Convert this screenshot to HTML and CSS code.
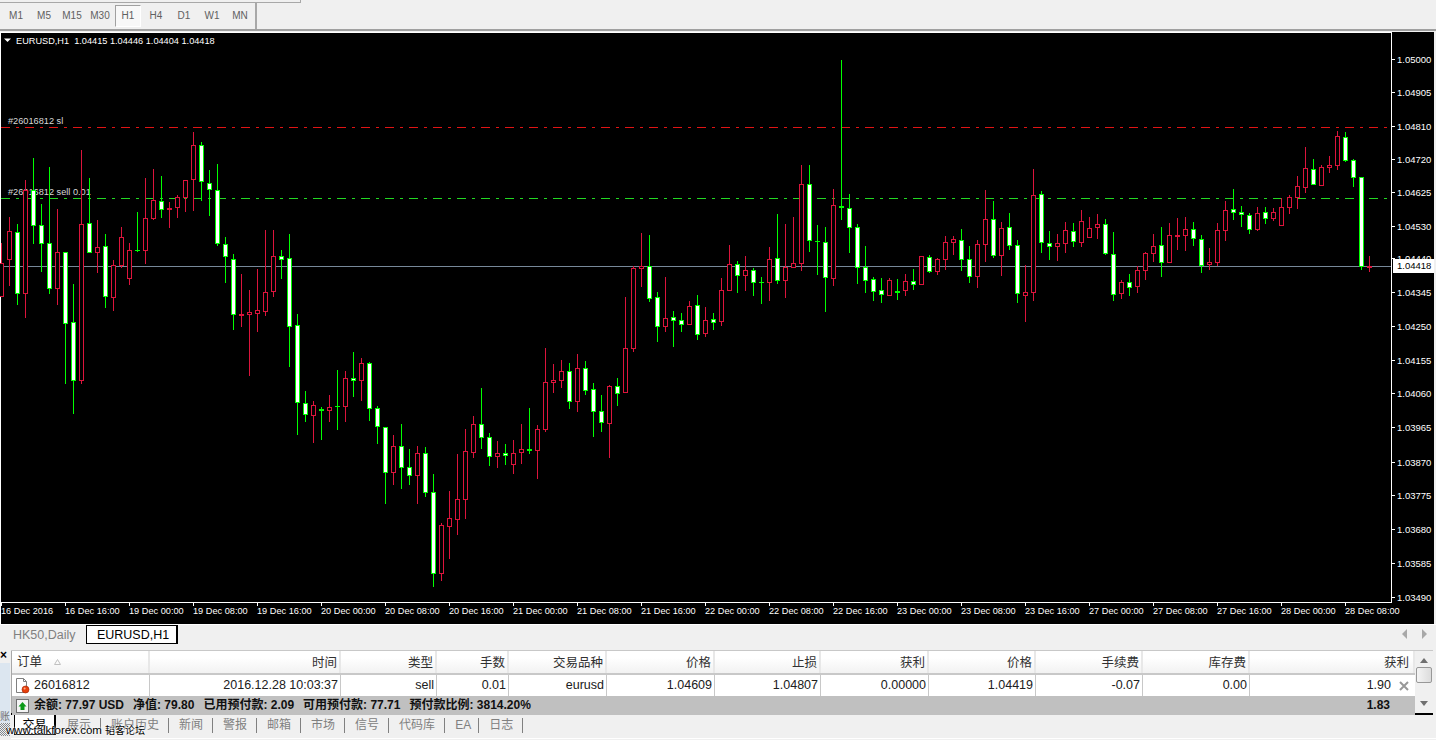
FILE: index.html
```html
<!DOCTYPE html>
<html>
<head>
    <meta charset="utf-8">
    <link rel="stylesheet" href="styles.css">
</head>
<body>
    <!-- Timeframe toolbar -->
    <div class="toolbar">
        <div class="toolbar-edge"></div>
        <div class="periods">
            <span class="period">M1</span>
            <span class="period">M5</span>
            <span class="period">M15</span>
            <span class="period">M30</span>
            <span class="period active">H1</span>
            <span class="period">H4</span>
            <span class="period">D1</span>
            <span class="period">W1</span>
            <span class="period">MN</span>
        </div>
    </div>

    <!-- Filled in by chart.js -->
    <svg id="chart" class="chart" viewBox="0 32 1434 592"></svg>

    <!-- Chart window tabs -->
    <div class="chart-tabs">
        <span class="chart-tab">HK50,Daily</span>
        <span class="chart-tab active">EURUSD,H1</span>
        <div class="tab-nav">
            <svg width="6" height="10" viewBox="0 0 6 10"><path d="M5 0V10L0 5Z"/></svg>
            <svg width="6" height="10" viewBox="0 0 6 10"><path d="M1 0V10L6 5Z"/></svg>
        </div>
    </div>

    <!-- Terminal panel -->
    <div class="terminal">
        <div class="side-strip">
            <span class="side-close">×</span>
            <div class="side-label">账</div>
            <div class="side-hatch"></div>
        </div>
        <div class="terminal-main">
            <div class="trade-area">
                <div class="trade-table">
                    <div class="grid-row head-row">
                        <div class="cell first">订单
                            <svg class="sort-mark" width="7" height="6" viewBox="0 0 7 6"><path d="M3.500 .5L6.500 5.500H.5Z"/></svg>
                        </div>
                        <div class="cell">时间</div>
                        <div class="cell">类型</div>
                        <div class="cell">手数</div>
                        <div class="cell">交易品种</div>
                        <div class="cell">价格</div>
                        <div class="cell">止损</div>
                        <div class="cell">获利</div>
                        <div class="cell">价格</div>
                        <div class="cell">手续费</div>
                        <div class="cell">库存费</div>
                        <div class="cell">获利</div>
                    </div>
                    <div class="grid-row order-row">
                        <div class="cell first">
                            <svg class="row-icon" width="15" height="17" viewBox="0 0 15 17">
                                <path d="M1.500 1.500H8.500L11.500 4.500V15.500H1.500Z" fill="#fff" stroke="#808080"/>
                                <path d="M8.500 1.500V4.500H11.500" fill="none" stroke="#808080"/>
                                <circle cx="10.500" cy="12.500" r="3.500" fill="#e8400c" stroke="#a02000" stroke-width=".6"/>
                                <circle cx="9.600" cy="11.600" r="1" fill="#ffb090"/>
                            </svg>
                            26016812
                        </div>
                        <div class="cell">2016.12.28 10:03:37</div>
                        <div class="cell">sell</div>
                        <div class="cell">0.01</div>
                        <div class="cell">eurusd</div>
                        <div class="cell">1.04609</div>
                        <div class="cell">1.04807</div>
                        <div class="cell">0.00000</div>
                        <div class="cell">1.04419</div>
                        <div class="cell">-0.07</div>
                        <div class="cell">0.00</div>
                        <div class="cell last">1.90
                            <svg class="close-x" width="10" height="10" viewBox="0 0 10 10"><path d="M1 1L9 9M9 1L1 9"/></svg>
                        </div>
                    </div>
                    <div class="summary-row">
                        <svg class="summary-icon" width="13" height="14" viewBox="0 0 13 14">
                            <rect x=".5" y=".5" width="12" height="13" fill="#f4f4f4" stroke="#707070"/>
                            <path d="M6.500 3L10.500 7.500H8.500V11H4.500V7.500H2.500Z" fill="#0c9a18"/>
                        </svg>
                        <span class="summary-item">余额: 77.97 USD</span>
                        <span class="summary-item">净值: 79.80</span>
                        <span class="summary-item">已用预付款: 2.09</span>
                        <span class="summary-item">可用预付款: 77.71</span>
                        <span class="summary-item">预付款比例: 3814.20%</span>
                        <span class="summary-total">1.83</span>
                    </div>
                </div>
                <div class="scrollbar">
                    <svg width="8" height="5" viewBox="0 0 8 5"><path d="M4 0L8 5H0Z"/></svg>
                    <div class="scroll-thumb"></div>
                    <svg class="scroll-down" width="8" height="5" viewBox="0 0 8 5"><path d="M0 0H8L4 5Z"/></svg>
                </div>
            </div>
            <div class="terminal-tabs">
                <span class="term-tab active">交易</span>
                <span class="term-tab">展示</span>
                <span class="term-tab">账户历史</span>
                <span class="term-tab">新闻</span>
                <span class="term-tab">警报</span>
                <span class="term-tab">邮箱</span>
                <span class="term-tab">市场</span>
                <span class="term-tab">信号</span>
                <span class="term-tab">代码库</span>
                <span class="term-tab narrow">EA</span>
                <span class="term-tab">日志</span>
            </div>
        </div>
    </div>

    <div class="watermark">www.talkforex.com <span class="watermark-cn">韬客论坛</span></div>

    <script src="chart.js"></script>
</body>
</html>
```

FILE: styles.css
```css
body {
    margin: 0;
    width: 1436px;
    height: 740px;
    overflow: hidden;
    position: relative;
    display: flex;
    flex-direction: column;
    background-color: #f0f0f0;
    font-family: "Liberation Sans", "Noto Sans CJK SC", sans-serif;
    font-size: 12.5px;
    color: #202020;
}

/* Toolbar */
.toolbar {
    height: 32px;
    flex: none;
    box-sizing: border-box;
}
.toolbar-edge {
    width: 300px;
    height: 2px;
    border-bottom: 1px solid #a8a8a8;
    border-right: 1px solid #a8a8a8;
}
.periods {
    display: flex;
    width: 253px;
    height: 26px;
    padding-left: 2px;
    border-right: 2px solid #a8a8a8;
    align-items: center;
    box-sizing: content-box;
}
.toolbar::after {
    content: "";
    display: block;
    height: 2px;
    background-color: #a0a0a0;
}
.period {
    width: 28px;
    height: 22px;
    line-height: 22px;
    text-align: center;
    font-size: 10px;
    color: #606060;
    box-sizing: border-box;
}
.period.active {
    width: 26px;
    margin: 0 1px;
    line-height: 20px;
    background-color: #f8f8f8;
    border: 1px solid;
    border-color: #a0a0a0 #ffffff #ffffff #a0a0a0;
}

/* Chart */
.chart {
    display: block;
    flex: none;
    width: 1434px;
    height: 592px;
    background-color: #000000;
}
.chart rect {
    shape-rendering: crispEdges;
}
.chart-label {
    fill: #ffffff;
    font-size: 9.2px;
}
.chart-label.price {
    font-size: 9.5px;
}
.chart-label.order {
    fill: #d8d8d8;
}
.chart-label.price-now {
    fill: #000000;
}
.ohlc-marker {
    fill: #ffffff;
}

/* Chart tabs */
.chart-tabs {
    flex: none;
    height: 21px;
    display: flex;
    align-items: flex-start;
    border-top: 1px solid #ffffff;
    box-sizing: border-box;
    padding-left: 13px;
}
.chart-tab {
    width: 73px;
    height: 20px;
    line-height: 20px;
    color: #808080;
}
.chart-tab.active {
    width: 92px;
    height: 19px;
    line-height: 19px;
    box-sizing: border-box;
    padding-left: 3px;
    text-align: center;
    color: #000000;
    background-color: #ffffff;
    border: 1px solid #000000;
    border-right-width: 2px;
}
.tab-nav {
    margin-left: auto;
    margin-right: 9px;
    margin-top: 4px;
    display: flex;
    gap: 13px;
}
.tab-nav svg {
    fill: #a8a8a8;
}

/* Terminal */
.terminal {
    flex: 1;
    display: flex;
    padding-top: 5px;
    min-height: 0;
}
.side-strip {
    width: 10px;
    flex: none;
    margin-right: 1px;
    display: flex;
    flex-direction: column;
}
.side-close {
    height: 13px;
    line-height: 10px;
    font-size: 12px;
    font-weight: bold;
    color: #000000;
}
.side-label {
    flex: 1;
    background-color: #dce6f0;
    font-size: 10px;
    line-height: 10px;
    padding-top: 49px;
    box-sizing: border-box;
    color: #707070;
    overflow: hidden;
}
.side-hatch {
    height: 13px;
    margin-bottom: 4px;
    background: repeating-conic-gradient(#808890 0 25%, #f0f0f0 0 50%) 0 0 / 2px 2px;
}
.terminal-main {
    flex: 1;
    min-width: 0;
    display: flex;
    flex-direction: column;
}
.trade-area {
    display: flex;
    height: 65px;
    border-bottom: 2px solid #000000;
    margin-right: 3px;
    border-top: 1px solid #c8c8c8;
    box-sizing: border-box;
}
.trade-table {
    width: 1404px;
    flex: none;
    background-color: #ffffff;
    border-left: 1px solid #a8a8a8;
    box-sizing: border-box;
}
.grid-row {
    display: grid;
    grid-template-columns: 138px 191px 96px 72px 98px 108px 106px 108px 107px 107px 107px 165px;
}
.cell {
    text-align: right;
    padding-right: 3px;
    border-right: 1px solid #c8c8c8;
    overflow: hidden;
    white-space: nowrap;
}
.cell:last-child {
    border-right: none;
}
.cell.first {
    text-align: left;
    display: flex;
    align-items: center;
}
.head-row {
    height: 22px;
    line-height: 24px;
    background: linear-gradient(#ffffff 0 30%, #f2f2f2 100%);
    border-bottom: 2px solid #c8c8c8;
}
.head-row .cell {
    border-right: 2px solid #e8e8e8;
    padding-right: 2px;
    box-sizing: border-box;
    color: #303030;
}
.head-row .cell:last-child {
    padding-right: 4px;
}
.head-row .cell.first {
    padding-left: 5px;
}
.sort-mark {
    margin-left: 12px;
    fill: none;
    stroke: #c0c0c0;
}
.order-row {
    height: 21px;
    line-height: 21px;
}
.order-row .cell {
    box-sizing: border-box;
    padding-right: 2px;
}
.order-row .cell.first {
    padding-left: 3px;
}
.row-icon {
    margin-right: 4px;
}
.cell.last {
    display: flex;
    justify-content: flex-end;
    align-items: center;
    padding-right: 6px;
}
.close-x {
    margin-left: 8px;
    stroke: #989898;
    stroke-width: 2;
}
.summary-row {
    height: 19px;
    line-height: 17px;
    display: flex;
    align-items: center;
    background-color: #c0c0c0;
    font-weight: bold;
    font-size: 12px;
    color: #101010;
    padding-left: 4px;
    gap: 9px;
}
.summary-icon {
    margin-right: -4px;
    flex: none;
}
.summary-total {
    margin-left: auto;
    margin-right: 25px;
}
.scrollbar {
    flex: 1;
    display: flex;
    flex-direction: column;
    align-items: center;
    padding-top: 7px;
    padding-bottom: 7px;
    box-sizing: border-box;
    fill: #707070;
}
.scroll-thumb {
    width: 14px;
    height: 14px;
    margin-top: 4px;
    border: 1px solid #989898;
    border-radius: 2px;
    background: linear-gradient(90deg, #f4f4f4, #dcdcdc);
}
.scroll-down {
    margin-top: auto;
}
.terminal-tabs {
    display: flex;
    height: 23px;
    align-items: flex-start;
    border-bottom: 1px solid #ffffff;
    padding-left: 3px;
    box-sizing: content-box;
}
.term-tab {
    margin-top: 3px;
    padding: 0 9px 0 10px;
    height: 15px;
    line-height: 15px;
    color: #808080;
    border-right: 1px solid #808080;
    font-size: 12px;
}
.term-tab.narrow {
    padding-right: 7px;
}
.term-tab.active {
    margin-top: 0;
    width: 42px;
    height: 20px;
    padding: 0;
    box-sizing: border-box;
    line-height: 20px;
    text-align: center;
    color: #000000;
    background-color: #ffffff;
    border: 1px solid #000000;
    border-top: none;
    border-right-width: 2px;
    margin-right: 1px;
}

/* Forum watermark over the corner of the panel */
.watermark {
    position: absolute;
    left: 6px;
    top: 723px;
    font-size: 11.5px;
    line-height: 15px;
    color: #000000;
    text-shadow: 0 0 2px #ffffff, 0 0 2px #ffffff;
    white-space: nowrap;
}
.watermark-cn {
    font-size: 10px;
}
```

FILE: chart.js
```js
// candle rows: [colour, high, body top, body bottom, low]
// y values are measured at 3x from the group's origin oy
var groups = [
    { oy: 130, rows: [
        ['r',340,400,500,500], ['r',262,304,389,467], ['g',282,307,491,525], ['r',150,181,491,563],
        ['g',84,181,287,342], ['g',222,286,341,426], ['g',111,340,476,491], ['r',238,367,476,525],
        ['g',367,367,581,762], ['g',462,577,752,852], ['r',60,283,752,762], ['g',144,280,368,368],
        ['r',270,352,368,429], ['g',312,349,500,534], ['r',390,406,503,543], ['r',291,322,409,414],
        ['r',339,361,446,465], ['g',246,360,363,366], ['r',144,265,362,402], ['r',117,211,266,270],
        ['g',138,214,239,264], ['r',216,235,239,294], ['r',195,202,233,264], ['r',150,151,205,246],
        ['r',6,46,149,243], ['g',36,46,157,213], ['g',120,160,181,258], ['g',102,181,343,348],
        ['g',321,343,382,459], ['g',372,388,556,600]
    ]},
    { oy: 240, rows: [
        ['r',102,222,228,261], ['r',150,217,224,408], ['r',87,211,221,276], ['r',-30,157,215,228],
        ['r',-30,49,155,171], ['g',30,49,59,117], ['g',-18,55,260,381], ['g',222,256,488,585],
        ['g',453,490,524,546], ['r',483,496,527,609], ['g',501,507,512,600], ['r',465,502,512,546],
        ['g',390,498,501,570], ['r',393,415,500,546], ['g',336,415,422,471], ['r',354,370,422,483],
        ['g',366,370,506,543], ['g',498,505,560,612], ['g',562,562,698,792], ['r',585,619,698,735],
        ['g',552,619,683,747], ['g',627,682,707,735], ['r',618,640,707,792], ['g',621,640,758,771],
        ['g',702,757,1001,1041], ['r',849,856,1001,1023], ['r',753,835,860,957], ['r',642,778,839,885],
        ['r',567,634,779,837], ['r',528,553,638,654], ['g',444,553,593,627], ['g',579,592,650,678],
        ['r',603,640,650,684]
    ]},
    { oy: 230, rows: [
        ['g',642,670,677,705], ['r',630,670,704,732], ['r',582,658,668,702], ['g',534,657,663,672],
        ['r',585,598,662,747], ['r',354,457,600,606], ['r',402,451,458,489], ['r',390,424,453,474],
        ['g',399,424,516,537], ['r',372,415,516,546], ['g',393,415,483,495], ['g',459,478,546,621],
        ['g',495,544,579,606], ['r',465,469,582,684], ['g',444,469,492,528], ['r',201,355,488,488],
        ['r',108,114,357,366], ['r',9,108,117,171], ['g',15,109,207,216], ['g',186,202,291,336],
        ['r',141,265,291,306], ['g',243,262,273,351], ['g',249,271,285,306], ['r',213,229,285,285],
        ['g',195,226,315,330], ['r',231,271,312,321], ['g',249,268,279,300], ['r',144,181,276,288],
        ['r',45,103,183,183], ['g',93,103,138,189], ['r',78,121,138,183], ['g',114,121,159,198],
        ['g',141,156,160,222], ['r',51,88,159,213], ['g',-48,85,153,162]
    ]},
    { oy: 150, rows: [
        ['r',222,352,392,444], ['r',201,340,353,353], ['r',45,103,342,363], ['g',45,103,272,306],
        ['g',225,273,276,375], ['g',231,277,383,486], ['r',117,166,386,408], ['g',-270,168,173,210],
        ['g',132,175,233,309], ['g',222,232,353,402], ['g',288,352,392,429], ['g',381,388,425,453],
        ['g',384,421,434,459], ['r',384,391,437,437], ['g',387,424,428,450], ['r',372,394,422,438],
        ['g',357,394,404,420], ['r',319,319,404,404], ['g',315,322,365,369], ['r',324,328,365,375],
        ['r',258,277,329,360], ['r',258,268,278,315], ['g',237,271,329,363], ['g',288,328,380,399],
        ['r',270,283,380,414], ['r',120,208,284,336], ['g',153,208,317,324], ['r',216,235,317,378],
        ['g',189,232,287,300], ['g',270,286,433,459], ['r',345,427,437,516], ['r',57,136,428,453],
        ['g',123,133,280,309], ['g',243,280,290,330], ['r',252,280,292,333], ['r',216,241,281,309],
        ['g',219,244,275,291]
    ]},
    { oy: 120, rows: [
        ['r',270,304,368,381], ['r',291,325,353,353], ['r',282,313,323,357], ['g',297,313,401,405],
        ['g',336,403,524,543], ['r',480,487,521,537], ['g',462,487,503,528], ['r',438,451,500,519],
        ['r',396,400,452,480], ['r',342,379,401,426], ['g',321,376,428,471], ['r',309,346,428,428],
        ['r',294,346,350,390], ['r',291,328,347,393], ['g',306,328,358,378], ['g',345,358,437,459],
        ['r',384,427,434,450], ['r',309,331,428,438], ['r',243,271,334,363], ['g',207,268,278,300],
        ['g',258,277,284,321], ['g',279,286,331,342], ['r',261,280,329,333], ['g',261,277,296,312],
        ['r',264,277,296,303], ['r',235,262,317,317], ['r',225,232,263,282], ['r',168,199,233,267],
        ['r',81,145,203,219], ['g',117,148,194,194], ['r',135,142,197,197], ['r',108,136,143,159],
        ['r',33,49,137,150], ['g',36,52,122,126], ['g',117,121,173,201], ['g',171,172,442,450],
        ['r',408,439,443,456]
    ]}
];

var prices = [
    ['1.05000',59], ['1.04905',92], ['1.04810',126], ['1.04720',159], ['1.04625',192], ['1.04530',226],
    ['1.04440',258], ['1.04345',292], ['1.04250',326], ['1.04155',360], ['1.04060',393], ['1.03965',427],
    ['1.03870',462], ['1.03775',495], ['1.03680',529], ['1.03585',563], ['1.03490',597]
];

var times = ['16 Dec 2016', '16 Dec 16:00', '19 Dec 00:00', '19 Dec 08:00', '19 Dec 16:00', '20 Dec 00:00',
    '20 Dec 08:00', '20 Dec 16:00', '21 Dec 00:00', '21 Dec 08:00', '21 Dec 16:00', '22 Dec 00:00',
    '22 Dec 08:00', '22 Dec 16:00', '23 Dec 00:00', '23 Dec 08:00', '23 Dec 16:00', '27 Dec 00:00',
    '27 Dec 08:00', '27 Dec 16:00', '28 Dec 00:00', '28 Dec 08:00'];

var GREEN = '#00ff00', RED = '#dc143c', FRAME = '#ffffff';
var PLOT_RIGHT = 1391, PLOT_BOTTOM = 602;
var out = '';

function rect(x, y, w, h, fill) {
    out += '<rect x="' + x + '" y="' + y + '" width="' + w + '" height="' + h + '" fill="' + fill + '"/>';
}

function label(x, y, text, cls) {
    out += '<text class="chart-label ' + (cls || '') + '" x="' + x + '" y="' + y + '">' + text + '</text>';
}

// order lines: 9 on, 6 off, 3 on, 6 off
function dashLine(y, color) {
    for (var x = 1; x < PLOT_RIGHT; x += 24) {
        rect(x, y, 9, 1, color);
        if (x + 15 < PLOT_RIGHT) rect(x + 15, y, 3, 1, color);
    }
}

function drawCandles() {
    var i = 0;
    groups.forEach(function (group) {
        group.rows.forEach(function (row) {
            var x = 1 + i * 8;
            var color = row[0] == 'g' ? GREEN : RED;
            var high = Math.round(group.oy + row[1] / 3);
            var top = Math.round(group.oy + row[2] / 3);
            var bottom = Math.round(group.oy + row[3] / 3);
            var low = Math.round(group.oy + row[4] / 3);
            var h = Math.max(bottom - top, 1);
            rect(x, high, 1, Math.max(low - high, 1), color);
            rect(x - 2, top, 5, h, color);
            if (h > 2) rect(x - 1, top + 1, 3, h - 2, row[0] == 'g' ? '#ffffff' : '#000000');
            i++;
        });
    });
}

// frame of the plot area
rect(0, 32, PLOT_RIGHT + 1, 1, FRAME);
rect(0, 32, 1, 592, FRAME);
rect(PLOT_RIGHT, 32, 1, PLOT_BOTTOM - 31, FRAME);
rect(0, PLOT_BOTTOM, PLOT_RIGHT + 1, 1, FRAME);

// chart caption
out += '<path class="ohlc-marker" d="M4 38.500H11L7.500 42Z"/>';
label(16, 44, 'EURUSD,H1&#160;&#160;1.04415 1.04446 1.04404 1.04418');

// order labels sit behind the candles
label(8, 124, '#26016812 sl', 'order');
label(8, 195, '#26016812 sell 0.01', 'order');
dashLine(127, '#e01414');
dashLine(198, '#22d822');
rect(1, 266, PLOT_RIGHT - 1, 1, '#778899');

drawCandles();

// price axis
prices.forEach(function (p) {
    rect(PLOT_RIGHT, p[1], 4, 1, FRAME);
    label(1397, p[1] + 4, p[0], 'price');
});
rect(1393, 259, 41, 14, '#ffffff');
label(1397, 269, '1.04418', 'price price-now');

// time axis
times.forEach(function (t, n) {
    var x = 1 + n * 64;
    rect(x, PLOT_BOTTOM, 1, 4, FRAME);
    label(x, 614, t);
});

document.getElementById('chart').innerHTML = out;
```
